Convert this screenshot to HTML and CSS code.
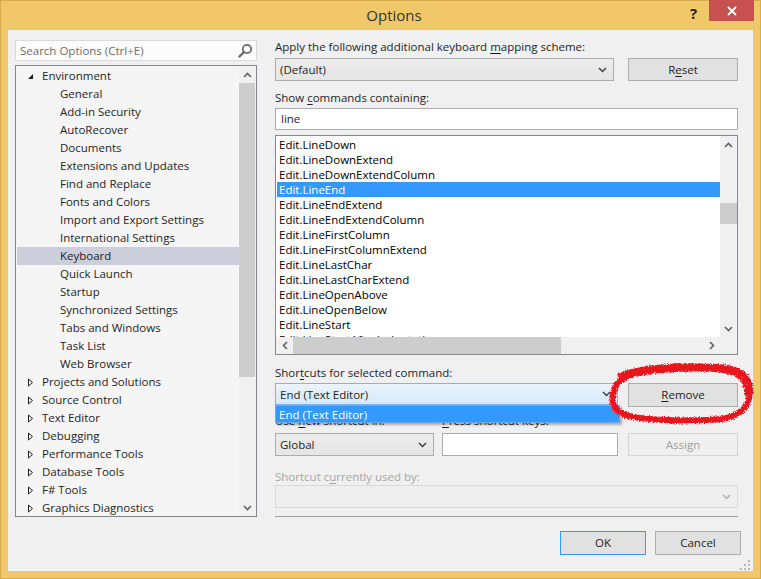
FILE: index.html
```html
<!DOCTYPE html>
<html>
<head>
<meta charset="utf-8">
<link rel="stylesheet" href="styles.css">
</head>
<body>
<div class="window">
  <div class="titlebar">
    <span class="title">Options</span>
    <span class="help">?</span>
    <span class="close"><svg width="10" height="10" viewBox="0 0 10 10"><path d="M1 1L9 9M9 1L1 9" stroke="#fff" stroke-width="1.8"/></svg></span>
  </div>
  <div class="client">
    <div class="leftcol">
      <div class="search">
        <span class="placeholder">Search Options (Ctrl+E)</span>
        <svg class="mag" width="15" height="15" viewBox="0 0 15 15"><circle cx="9" cy="6" r="4.2" fill="none" stroke="#6a6a6a" stroke-width="1.8"/><path d="M6 9L1.5 13.5" stroke="#6a6a6a" stroke-width="2.4" stroke-linecap="round"/></svg>
      </div>
      <div class="tree">
        <div class="tree-items">
          <div class="trow top"><svg class="exp" width="7" height="7" viewBox="0 0 7 7"><path d="M6 1V6H1Z" fill="#1e1e1e"/></svg>Environment</div>
          <div class="trow child">General</div>
          <div class="trow child">Add-in Security</div>
          <div class="trow child">AutoRecover</div>
          <div class="trow child">Documents</div>
          <div class="trow child">Extensions and Updates</div>
          <div class="trow child">Find and Replace</div>
          <div class="trow child">Fonts and Colors</div>
          <div class="trow child">Import and Export Settings</div>
          <div class="trow child">International Settings</div>
          <div class="trow child sel">Keyboard</div>
          <div class="trow child">Quick Launch</div>
          <div class="trow child">Startup</div>
          <div class="trow child">Synchronized Settings</div>
          <div class="trow child">Tabs and Windows</div>
          <div class="trow child">Task List</div>
          <div class="trow child">Web Browser</div>
          <div class="trow top"><svg class="exp" width="7" height="9" viewBox="0 0 7 9"><path d="M1.5 1L5.5 4.5L1.5 8Z" fill="none" stroke="#1e1e1e" stroke-width="1"/></svg>Projects and Solutions</div>
          <div class="trow top"><svg class="exp" width="7" height="9" viewBox="0 0 7 9"><path d="M1.5 1L5.5 4.5L1.5 8Z" fill="none" stroke="#1e1e1e" stroke-width="1"/></svg>Source Control</div>
          <div class="trow top"><svg class="exp" width="7" height="9" viewBox="0 0 7 9"><path d="M1.5 1L5.5 4.5L1.5 8Z" fill="none" stroke="#1e1e1e" stroke-width="1"/></svg>Text Editor</div>
          <div class="trow top"><svg class="exp" width="7" height="9" viewBox="0 0 7 9"><path d="M1.5 1L5.5 4.5L1.5 8Z" fill="none" stroke="#1e1e1e" stroke-width="1"/></svg>Debugging</div>
          <div class="trow top"><svg class="exp" width="7" height="9" viewBox="0 0 7 9"><path d="M1.5 1L5.5 4.5L1.5 8Z" fill="none" stroke="#1e1e1e" stroke-width="1"/></svg>Performance Tools</div>
          <div class="trow top"><svg class="exp" width="7" height="9" viewBox="0 0 7 9"><path d="M1.5 1L5.5 4.5L1.5 8Z" fill="none" stroke="#1e1e1e" stroke-width="1"/></svg>Database Tools</div>
          <div class="trow top"><svg class="exp" width="7" height="9" viewBox="0 0 7 9"><path d="M1.5 1L5.5 4.5L1.5 8Z" fill="none" stroke="#1e1e1e" stroke-width="1"/></svg>F# Tools</div>
          <div class="trow top"><svg class="exp" width="7" height="9" viewBox="0 0 7 9"><path d="M1.5 1L5.5 4.5L1.5 8Z" fill="none" stroke="#1e1e1e" stroke-width="1"/></svg>Graphics Diagnostics</div>
        </div>
        <div class="vscroll tree-scroll">
          <div class="arrow"><svg width="9" height="6" viewBox="0 0 9 6"><path d="M1 5L4.5 1.5L8 5" fill="none" stroke="#606060" stroke-width="1.6"/></svg></div>
          <div class="tthumb"></div>
          <div class="spacer"></div>
          <div class="arrow"><svg width="9" height="6" viewBox="0 0 9 6"><path d="M1 1L4.5 4.5L8 1" fill="none" stroke="#606060" stroke-width="1.6"/></svg></div>
        </div>
      </div>
    </div>

    <div class="rightcol">
      <div class="label">Apply the following additional keyboard <u>m</u>apping scheme:</div>
      <div class="row r1">
        <div class="combo wide"><span>(Default)</span><svg class="chev" width="9" height="6" viewBox="0 0 9 6"><path d="M1 1L4.5 4.5L8 1" fill="none" stroke="#404040" stroke-width="1.5"/></svg></div>
        <div class="btn">R<u>e</u>set</div>
      </div>
      <div class="label l2">Show <u>c</u>ommands containing:</div>
      <div class="textbox tb1">line</div>
      <div class="list">
        <div class="list-items">
          <div class="lrow">Edit.LineDown</div>
          <div class="lrow">Edit.LineDownExtend</div>
          <div class="lrow">Edit.LineDownExtendColumn</div>
          <div class="lrow sel">Edit.LineEnd</div>
          <div class="lrow">Edit.LineEndExtend</div>
          <div class="lrow">Edit.LineEndExtendColumn</div>
          <div class="lrow">Edit.LineFirstColumn</div>
          <div class="lrow">Edit.LineFirstColumnExtend</div>
          <div class="lrow">Edit.LineLastChar</div>
          <div class="lrow">Edit.LineLastCharExtend</div>
          <div class="lrow">Edit.LineOpenAbove</div>
          <div class="lrow">Edit.LineOpenBelow</div>
          <div class="lrow">Edit.LineStart</div>
          <div class="lrow">Edit.LineStartAfterIndentation</div>
        </div>
        <div class="vscroll list-vs">
          <div class="arrow"><svg width="9" height="6" viewBox="0 0 9 6"><path d="M1 5L4.5 1.5L8 5" fill="none" stroke="#606060" stroke-width="1.6"/></svg></div>
          <div class="lthumb"></div>
          <div class="spacer"></div>
          <div class="arrow"><svg width="9" height="6" viewBox="0 0 9 6"><path d="M1 1L4.5 4.5L8 1" fill="none" stroke="#606060" stroke-width="1.6"/></svg></div>
        </div>
        <div class="hscroll">
          <div class="harrow"><svg width="6" height="9" viewBox="0 0 6 9"><path d="M5 1L1.5 4.5L5 8" fill="none" stroke="#606060" stroke-width="1.6"/></svg></div>
          <div class="hthumb"></div>
          <div class="spacer"></div>
          <div class="harrow"><svg width="6" height="9" viewBox="0 0 6 9"><path d="M1 1L4.5 4.5L1 8" fill="none" stroke="#606060" stroke-width="1.6"/></svg></div>
        </div>
        <div class="corner"></div>
      </div>

      <div class="label l3">Shor<u>t</u>cuts for selected command:</div>
      <div class="row r3">
        <div class="combo focus"><span>End (Text Editor)</span><svg class="chev" width="9" height="6" viewBox="0 0 9 6"><path d="M1 1L4.5 4.5L8 1" fill="none" stroke="#404040" stroke-width="1.5"/></svg>
          <div class="dropdown">End (Text Editor)</div>
        </div>
        <div class="btn remove"><u>R</u>emove</div>
      </div>
      <div class="row r4">
        <div class="label half">Use <u>n</u>ew shortcut in:</div>
        <div class="label half2"><u>P</u>ress shortcut keys:</div>
      </div>
      <div class="row r5">
        <div class="combo global"><span>Global</span><svg class="chev" width="9" height="6" viewBox="0 0 9 6"><path d="M1 1L4.5 4.5L8 1" fill="none" stroke="#404040" stroke-width="1.5"/></svg></div>
        <div class="textbox keys"></div>
        <div class="btn disabled">Assign</div>
      </div>
      <div class="label dis l6">Shortcut c<u>u</u>rrently used by:</div>
      <div class="combo discombo"><span></span><svg class="chev" width="9" height="6" viewBox="0 0 9 6"><path d="M1 1L4.5 4.5L8 1" fill="none" stroke="#b0b0b0" stroke-width="1.5"/></svg></div>
      <div class="sep"></div>
      <div class="row bottom">
        <div class="btn ok">OK</div>
        <div class="btn">Cancel</div>
      </div>
    </div>
    <svg class="grip" width="10" height="10" viewBox="0 0 10 10">
      <rect x="8" y="0" width="2" height="2" fill="#b8b8b8"/>
      <rect x="4" y="4" width="2" height="2" fill="#b8b8b8"/><rect x="8" y="4" width="2" height="2" fill="#b8b8b8"/>
      <rect x="0" y="8" width="2" height="2" fill="#b8b8b8"/><rect x="4" y="8" width="2" height="2" fill="#b8b8b8"/><rect x="8" y="8" width="2" height="2" fill="#b8b8b8"/>
    </svg>
  </div>
  <svg class="scribble" width="150" height="64" viewBox="0 0 150 64">
    <defs>
      <filter id="rough" x="-10%" y="-20%" width="120%" height="140%">
        <feTurbulence type="fractalNoise" baseFrequency="1.2" numOctaves="2" seed="5" result="n"/>
        <feDisplacementMap in="SourceGraphic" in2="n" scale="4.5" xChannelSelector="R" yChannelSelector="G"/>
      </filter>
    </defs>
    <g filter="url(#rough)" fill="none" stroke="#e8141c" stroke-linecap="round">
      <path d="M14 13 C32 4 72 2 110 4 C133 5 144 13 143 29 C142 47 130 57 100 57 C70 58 40 57 22 53 C8 50 4 40 6 30 C8 22 12 16 24 12" stroke-width="6"/>
      <path d="M8 22 C20 9 60 6 105 7 C128 8 140 15 139 31" stroke-width="3.5"/>
    </g>
  </svg>
</div>
</body>
</html>
```
FILE: styles.css
```css
* { box-sizing: border-box; }
html, body { margin: 0; padding: 0; }
body {
  width: 761px; height: 579px; overflow: hidden;
  font-family: "Open Sans", "Noto Sans", sans-serif;
  font-size: 11.5px;
  color: #1e1e1e;
}
u { text-decoration: underline; text-underline-offset: 2px; text-decoration-thickness: 1px; }
.window {
  position: relative;
  width: 761px; height: 579px;
  background: #f0c869;
  border: 1px solid #d8ac4c;
  display: flex; flex-direction: column;
}
.titlebar {
  height: 29px; flex: none;
  display: flex; align-items: flex-start;
  position: relative;
}
.title {
  position: absolute; left: 0; right: 0; top: 4px;
  text-align: center; font-size: 15px; color: #333;
  padding-left: 27px;
}
.help {
  position: absolute; left: 689px; top: 2px;
  font-size: 15px; font-weight: bold; color: #222;
}
.close {
  position: absolute; left: 708px; top: -1px;
  width: 45px; height: 21px;
  background: #c75050;
  display: flex; align-items: center; justify-content: center;
}
.client {
  position: relative;
  margin: 0 7px 0 7px;
  height: 541px;
  background: #f0f0f0;
  display: flex;
  padding: 9px 0 0 7px;
}
.leftcol { width: 242px; flex: none; margin-top: 1px; }
.search {
  height: 21px; border: 1px solid #dadada; background: #fcfcfc;
  display: flex; align-items: center; justify-content: space-between;
  padding: 0 3px 0 4px; margin-bottom: 4px;
}
.placeholder { color: #6d6d6d; }
.tree {
  height: 452px; border: 1px solid #828790; background: #f5f5f5;
  display: flex;
}
.tree-items { flex: 1; padding: 1px 0 0 1px; }
.trow { height: 18px; line-height: 18px; white-space: nowrap; display: flex; align-items: center; }
.trow.top { padding-left: 10px; }
.trow.top .exp { margin-right: 8px; flex: none; }
.trow.child { padding-left: 43px; }
.trow.sel { background: #cccedb; }
.vscroll { display: flex; flex-direction: column; width: 17px; flex: none; background: #f0f0f0; }
.arrow { height: 17px; display: flex; align-items: center; justify-content: center; flex: none; }
.spacer { flex: 1; }
.tthumb { height: 294px; background: #cdcdcd; margin: 0 1px 0 0; }
.rightcol { width: 463px; margin-left: 18px; display: flex; flex-direction: column; }
.label { height: 16px; line-height: 16px; white-space: nowrap; }
.row { display: flex; }
.r1 { margin-top: 3px; height: 23px; }
.combo {
  position: relative;
  height: 23px; border: 1px solid #acacac; background: linear-gradient(#ececec, #e5e5e5);
  display: flex; align-items: center; justify-content: space-between;
  padding: 0 6px 0 4px;
}
.combo.wide { width: 339px; }
.btn {
  height: 23px; width: 110px; margin-left: auto;
  border: 1px solid #adadad; background: #e1e1e1;
  display: flex; align-items: center; justify-content: center;
  padding-bottom: 1px;
}
.l2 { margin-top: 9px; }
.textbox { height: 22px; border: 1px solid #abadb3; background: #fff; padding: 0 5px; line-height: 20px; }
.tb1 { margin-top: 2px; }
.list {
  margin-top: 5px; height: 220px; border: 1px solid #828790; background: #fff;
  display: grid; grid-template-columns: 1fr 17px; grid-template-rows: 1fr 17px;
}
.list-items { overflow: hidden; padding: 1px 0 0 1px; }
.lrow { height: 15px; line-height: 15px; padding-left: 2px; color: #000; white-space: nowrap; }
.lrow.sel { background: #3399ff; color: #fff; }
.list-vs { width: 17px; }
.lthumb { height: 21px; margin-top: 50px; background: #cdcdcd; flex: none; }
.hscroll { display: flex; background: #f0f0f0; height: 17px; }
.harrow { width: 17px; display: flex; align-items: center; justify-content: center; flex: none; }
.hthumb { width: 268px; background: #cdcdcd; flex: none; }
.corner { background: #f0f0f0; }
.l3 { margin-top: 10px; }
.r3 { margin-top: 2px; height: 24px; align-items: flex-start; }
.combo.focus {
  width: 343px; height: 22px;
  border-color: #7eb4ea;
  background: linear-gradient(#ecf4fc, #d4e8fb);
}
.dropdown {
  position: absolute; left: -1px; top: 21px; width: 345px; height: 18px;
  background: #3399ff; color: #fff; padding-left: 3px; line-height: 17px;
  border: 1px solid #6aa8e8;
  box-shadow: 2px 2px 2px rgba(0,0,0,0.28);
  z-index: 3;
}
.btn.remove { height: 24px; }
.r4 { margin-top: 6px; height: 16px; }
.half { width: 167px; }
.r5 { margin-top: 4px; height: 23px; }
.combo.global { width: 159px; }
.textbox.keys { width: 176px; height: 23px; margin-left: 8px; }
.btn.disabled { color: #a0a0a0; border-color: #d5d5d5; background: #efefef; }
.dis { color: #a6a6a6; }
.l6 { margin-top: 13px; }
.discombo { margin-top: 0; background: #efefef; border-color: #d9d9d9; }
.sep { margin-top: 8px; height: 1px; background: #a0a0a0; }
.bottom { margin-top: 14px; height: 24px; margin-right: -3px; justify-content: flex-end; gap: 9px; }
.bottom .btn { width: 86px; height: 24px; margin-left: 0; }
.btn.ok { border-color: #3399ff; }
.grip { position: absolute; right: 3px; bottom: 1px; }
.scribble { position: absolute; left: 606px; top: 362px; z-index: 5; }
```
